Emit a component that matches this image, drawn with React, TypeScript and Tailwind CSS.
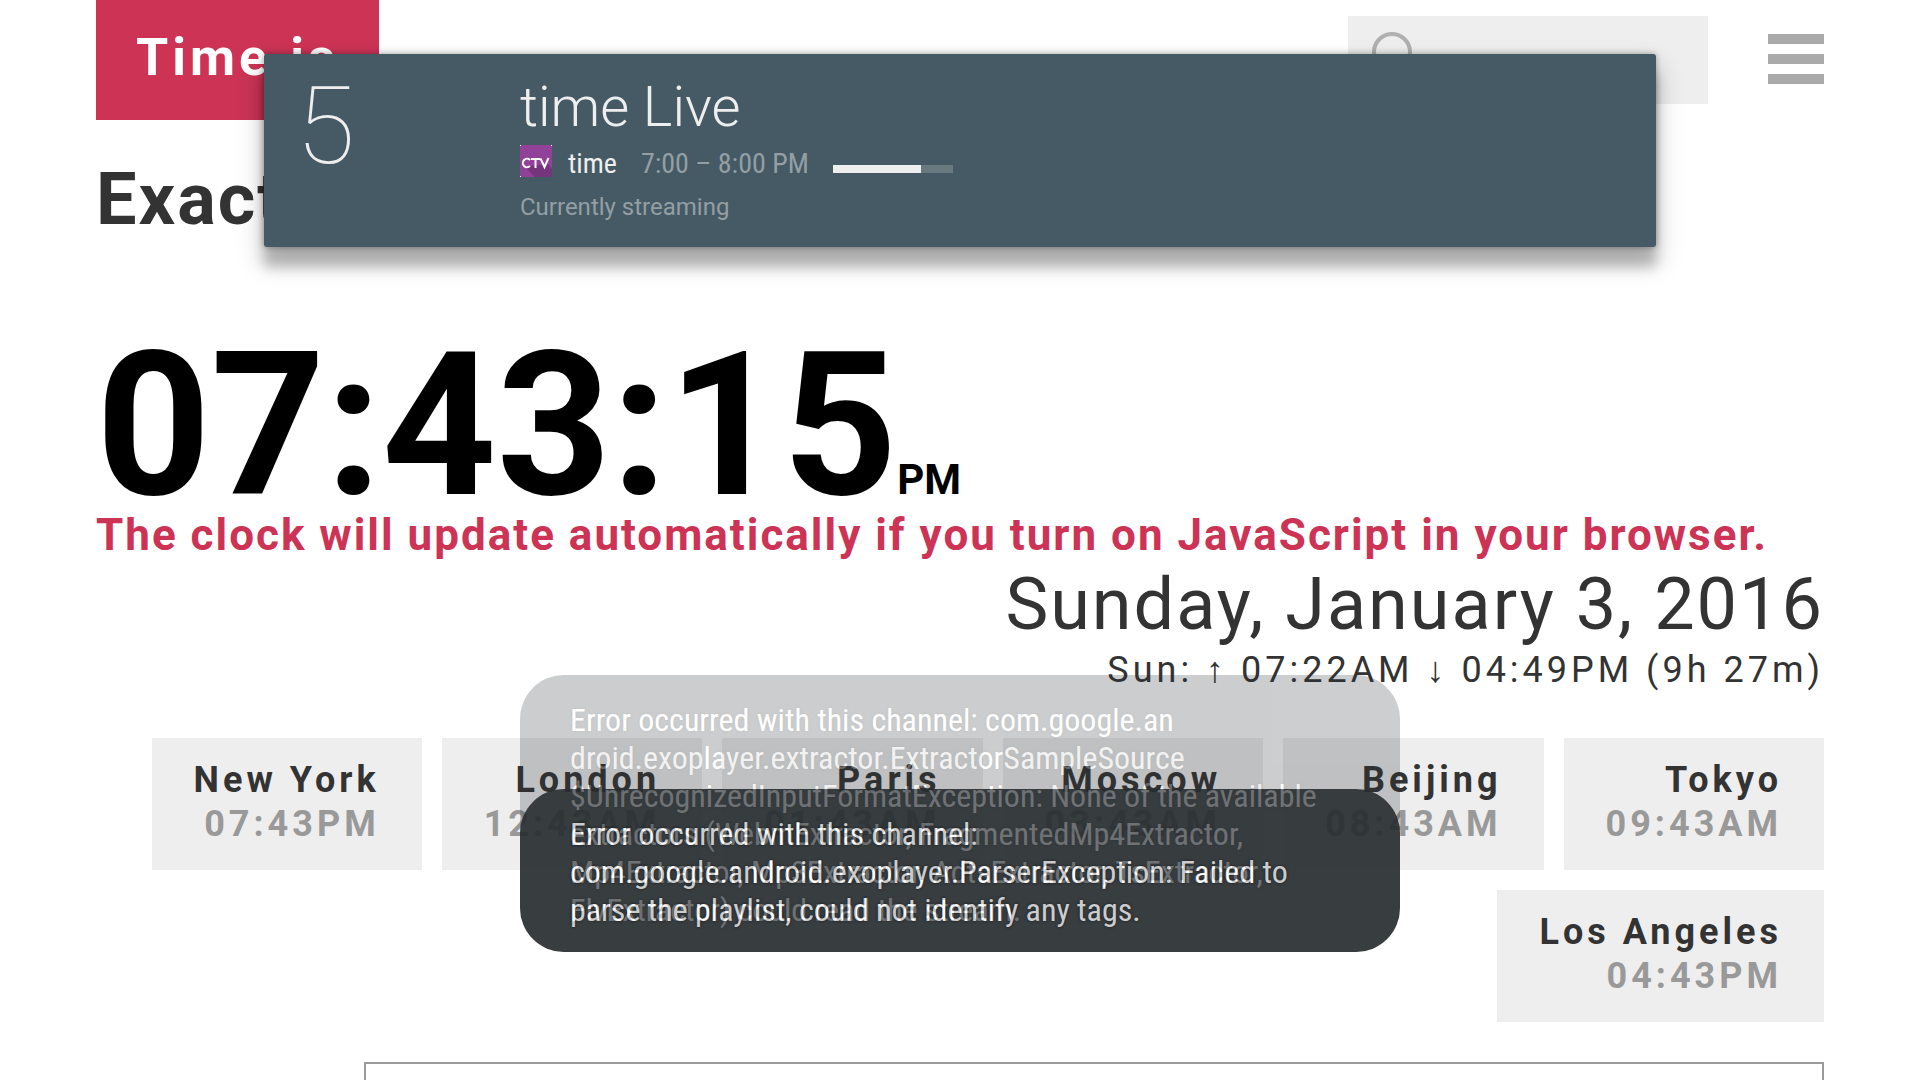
const cities = [
  { name: "New York", time: "07:43PM" },
  { name: "London", time: "12:43AM" },
  { name: "Paris", time: "01:43AM" },
  { name: "Moscow", time: "03:43AM" },
  { name: "Beijing", time: "08:43AM" },
  { name: "Tokyo", time: "09:43AM" },
  { name: "Los Angeles", time: "04:43PM" },
];

const playlistError = [
  "Error occurred with this channel:",
  "com.google.android.exoplayer.ParserException: Failed to",
  "parse the playlist, could not identify any tags.",
];

const extractorError = [
  "Error occurred with this channel: com.google.an",
  "droid.exoplayer.extractor.ExtractorSampleSource",
  "$UnrecognizedInputFormatException: None of the available",
  "extractors (WebmExtractor, FragmentedMp4Extractor,",
  "Mp4Extractor, Mp3Extractor, AdtsExtractor, TsExtractor,",
  "FlvExtractor) could read the stream.",
];

const condensed = "font-['Roboto_Condensed',Roboto,sans-serif]";

function Header() {
  return (
    <header className="flex items-start">
      <a
        href="#home"
        className="flex h-[120px] items-center bg-[#cc3355] px-10 pb-1 text-[52px] font-bold tracking-[4px] text-white"
      >
        Time.is
      </a>
      <label className="mt-4 ml-auto flex h-[88px] w-[360px] items-start bg-[#eeeeee] pt-4 pl-6">
        <svg className="h-14 w-14 shrink-0" viewBox="0 0 56 56" fill="none" stroke="#b0b0b0" strokeWidth="4">
          <circle cx="20" cy="20" r="18" />
          <path d="M32 33 L48 50" strokeWidth="6" />
        </svg>
        <input type="search" aria-label="Search" className="h-14 min-w-0 flex-1 bg-transparent outline-none" />
      </label>
      <button type="button" aria-label="Menu" className="mt-[34px] ml-[60px] flex w-14 flex-col gap-2.5">
        <span className="h-2.5 w-full bg-[#aaaaaa]" />
        <span className="h-2.5 w-full bg-[#aaaaaa]" />
        <span className="h-2.5 w-full bg-[#aaaaaa]" />
      </button>
    </header>
  );
}

function CityTile({ name, time }: { name: string; time: string }) {
  return (
    <a
      href={"#" + name}
      className="bg-[#eeeeee] px-[42px] pt-5 pb-6 text-right text-[36px] leading-[44px] font-bold tracking-[4px]"
    >
      <div className="text-[#333333]">{name}</div>
      <div className="text-[#999999]">{time}</div>
    </a>
  );
}

function ChannelIcon() {
  return (
    <svg className="mb-1.5 h-8 w-8 shrink-0" viewBox="0 0 32 32">
      <rect width="32" height="32" fill="#924199" />
      <path d="M5 22 L28 19 L32 24 V32 H15 Z" fill="#74357a" />
      <path d="M0 0h1v1H0zM31 0h1v1h-1zM0 31h1v1H0z" fill="#ffffff" />
      <g fill="none" stroke="#ffffff" strokeWidth="2">
        <path d="M10 15 A4.2 4.2 0 1 0 10 21" />
        <path d="M11 14 H20 M15.5 14 V23" />
        <path d="M20.5 13.5 L24.5 22 L28.5 13" />
      </g>
    </svg>
  );
}

function ChannelBanner() {
  return (
    <section className="absolute inset-x-[264px] top-[54px] flex rounded-[3px] bg-[#455a64] pl-8 shadow-[0_20px_12px_rgba(0,0,0,0.2),0_14px_24px_4px_rgba(0,0,0,0.18),0_0_6px_rgba(0,0,0,0.35)]">
      <div className="w-56 text-[108px] leading-[144px] font-thin text-[#eeeeee]">5</div>
      <div className="pt-5 pb-[21px]">
        <h2 className="text-[56px] leading-[66px] font-light text-[#eeeeee]">time Live</h2>
        <div className={`${condensed} flex h-12 items-center text-[28px]`}>
          <ChannelIcon />
          <span className="ml-4 text-[#eeeeee]">time</span>
          <span className="ml-6 text-[#939fa4]">7:00 – 8:00 PM</span>
          <div
            role="progressbar"
            aria-label="Programme progress"
            aria-valuenow={73}
            className="mt-2.5 ml-6 h-2 w-[120px] bg-[#687a80]"
          >
            <div className="h-full bg-[#eeeeee]" style={{ width: "73%" }} />
          </div>
        </div>
        <p className="text-[24px] leading-[38px] text-[#939fa4]">Currently streaming</p>
      </div>
    </section>
  );
}

function Toast({ lines, fading = false }: { lines: string[]; fading?: boolean }) {
  return (
    <div
      role="alert"
      className={`${condensed} col-start-1 row-start-1 rounded-[44px] bg-[rgba(40,46,49,0.9)] px-[50px] pt-[26px] pb-[23px] text-[32px] leading-[38px] whitespace-nowrap text-white [text-shadow:0_0_3px_rgba(0,0,0,0.7)] ${fading ? "opacity-[0.26]" : ""}`}
    >
      {lines.map((line) => (
        <div key={line}>{line}</div>
      ))}
    </div>
  );
}

export default function App() {
  return (
    <div className="relative h-screen overflow-hidden bg-white px-24 font-[Roboto,sans-serif] text-[#333333]">
      <Header />
      <main className="pt-10">
        <h1 className="text-[72px] leading-[80px] font-bold tracking-[2px]">Exact time now:</h1>
        <div className="mt-26 flex items-baseline font-bold text-black">
          <time className="text-[200px] leading-[164px]">07:43:15</time>
          <span className="text-[42px] leading-[42px]">PM</span>
        </div>
        <p className="text-[44px] leading-[54px] font-bold tracking-[2px] text-[#cc3355]">
          The clock will update automatically if you turn on JavaScript in your browser.
        </p>
        <div className="text-right text-[72px] leading-[86px] tracking-[2px]">Sunday, January 3, 2016</div>
        <div className="text-right text-[36px] leading-[44px] tracking-[4px]">
          Sun: ↑ 07:22AM ↓ 04:49PM (9h 27m)
        </div>
        <nav className="mt-[46px] flex flex-wrap justify-end gap-5">
          {cities.map((city) => (
            <CityTile key={city.name} name={city.name} time={city.time} />
          ))}
        </nav>
        <div className="mt-10 ml-[268px] h-40 border-2 border-[#999999]" />
      </main>
      <ChannelBanner />
      <div className="absolute bottom-32 left-1/2 grid w-[880px] -translate-x-1/2 items-end">
        <Toast lines={playlistError} />
        <Toast lines={extractorError} fading />
      </div>
    </div>
  );
}
